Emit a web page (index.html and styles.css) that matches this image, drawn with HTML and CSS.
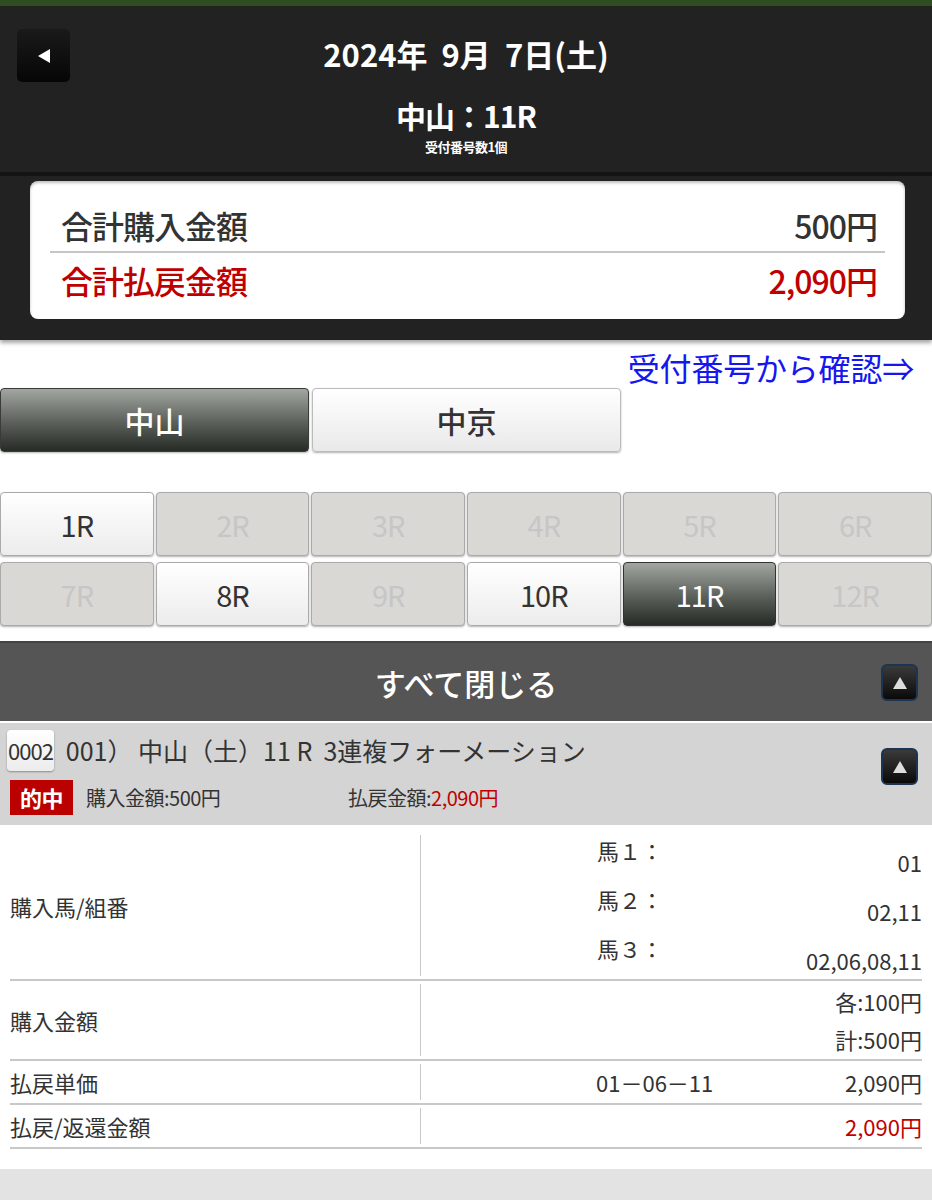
FILE: index.html
```html
<!DOCTYPE html>
<html lang="ja">
  <head>
    <meta charset="UTF-8" />
    <meta name="viewport" content="width=device-width, initial-scale=1.0" />
    <title>照会結果</title>
    <link rel="stylesheet" href="styles.css">
  </head>
  <body>
    <div class="topline"></div>
    <header class="head">
      <button class="back" type="button" aria-label="戻る">
        <svg width="16" height="18" viewBox="0 0 16 18"><path d="M2 9 L14 2 L14 16 Z" fill="#fff"/></svg>
      </button>
      <div class="date">2024年&nbsp; 9月&nbsp; 7日(土)</div>
      <div class="race">中山：11R</div>
      <div class="count">受付番号数1個</div>
    </header>
    <section class="summary">
      <div class="card">
        <div class="sum-row">
          <span>合計購入金額</span><span>500円</span>
        </div>
        <div class="sum-row red">
          <span>合計払戻金額</span><span>2,090円</span>
        </div>
      </div>
    </section>

    <div class="link-row"><a href="#" class="confirm">受付番号から確認⇒</a></div>

    <div class="venues">
      <button class="venue on" type="button">中山</button>
      <button class="venue" type="button">中京</button>
    </div>

    <div class="races">
      <button class="rb" type="button">1R</button>
      <button class="rb off" type="button">2R</button>
      <button class="rb off" type="button">3R</button>
      <button class="rb off" type="button">4R</button>
      <button class="rb off" type="button">5R</button>
      <button class="rb off" type="button">6R</button>
      <button class="rb off" type="button">7R</button>
      <button class="rb" type="button">8R</button>
      <button class="rb off" type="button">9R</button>
      <button class="rb" type="button">10R</button>
      <button class="rb sel" type="button">11R</button>
      <button class="rb off" type="button">12R</button>
    </div>

    <div class="closeall">
      <span>すべて閉じる</span>
      <button class="tog" type="button" aria-label="閉じる">
        <svg width="16" height="14" viewBox="0 0 16 14"><path d="M8 1 L15 13 L1 13 Z" fill="#ddd"/></svg>
      </button>
    </div>

    <div class="ticket">
      <div class="ticket-main">
        <div class="ticket-title">
          <span class="no">0002</span>
          <span>001）&nbsp;中山（土）11 R&nbsp; 3連複フォーメーション</span>
        </div>
        <div class="ticket-sub">
          <span class="hit">的中</span>
          <span class="buy">購入金額:500円</span>
          <span class="pay">払戻金額:<em>2,090円</em></span>
        </div>
      </div>
      <button class="tog" type="button" aria-label="閉じる">
        <svg width="16" height="14" viewBox="0 0 16 14"><path d="M8 1 L15 13 L1 13 Z" fill="#ddd"/></svg>
      </button>
    </div>

    <div class="detail">
      <div class="drow">
        <div class="dl">購入馬/組番</div>
        <div class="dr">
          <div class="horse"><span class="hl">馬１：</span><span class="hv">01</span></div>
          <div class="horse"><span class="hl">馬２：</span><span class="hv">02,11</span></div>
          <div class="horse"><span class="hl">馬３：</span><span class="hv">02,06,08,11</span></div>
        </div>
      </div>
      <div class="drow">
        <div class="dl">購入金額</div>
        <div class="dr stack">
          <span>各:100円</span>
          <span>計:500円</span>
        </div>
      </div>
      <div class="drow">
        <div class="dl">払戻単価</div>
        <div class="dr split"><span class="combo">01－06－11</span><span>2,090円</span></div>
      </div>
      <div class="drow">
        <div class="dl">払戻/返還金額</div>
        <div class="dr split"><span></span><span class="redtxt">2,090円</span></div>
      </div>
    </div>

    <footer class="foot"></footer>
  </body>
</html>
```

FILE: styles.css
```css
body {
  margin: 0;
  background: #fff;
  font-family: "Noto Sans CJK JP", "Noto Sans", sans-serif;
  color: #333;
}

button {
  font-family: inherit;
  cursor: pointer;
}

.topline {
  height: 6px;
  background: #304d22;
}

.head {
  position: relative;
  height: 170px;
  background: #222;
  color: #fff;
  text-align: center;
  border-bottom: 4px solid #141414;
  box-sizing: border-box;
  padding-top: 30px;
}

.back {
  position: absolute;
  left: 17px;
  top: 23px;
  width: 53px;
  height: 53px;
  border: none;
  border-radius: 5px;
  background: linear-gradient(#1a1a1a, #060606);
  display: flex;
  align-items: center;
  justify-content: center;
  padding: 0;
}

.date {
  font-size: 31px;
  font-weight: 700;
  line-height: 36px;
}

.race {
  margin-top: 26px;
  font-size: 30px;
  font-weight: 700;
  line-height: 34px;
  letter-spacing: -1px;
}

.count {
  margin-top: 7px;
  font-size: 13px;
  font-weight: 700;
  line-height: 16px;
  letter-spacing: -0.5px;
}

.summary {
  background: #222;
  padding: 5px 27px 21px 30px;
  box-shadow: 0 3px 4px rgba(0, 0, 0, 0.35);
}

.card {
  background: #fff;
  border-radius: 8px;
  padding: 18px 20px 12px 20px;
  box-shadow: inset 0 2px 3px rgba(0, 0, 0, 0.25);
}

.sum-row {
  display: flex;
  justify-content: space-between;
  font-size: 32px;
  font-weight: 500;
  line-height: 52px;
  padding: 0 8px 0 11px;
  letter-spacing: -1px;
  color: #333;
}

.sum-row:first-child {
  border-bottom: 2px solid #c6c6c6;
}

.sum-row.red {
  color: #c00000;
  line-height: 54px;
}

.link-row {
  display: flex;
  justify-content: flex-end;
  padding: 6px 18px 0 0;
  height: 42px;
}

.confirm {
  color: #1616ee;
  font-size: 32px;
  line-height: 42px;
  text-decoration: none;
  letter-spacing: -0.2px;
}

.venues {
  display: flex;
  gap: 3px;
}

.venue {
  width: 309px;
  height: 64px;
  border: 1px solid #bbb;
  border-radius: 4px;
  background: linear-gradient(#fff, #e9e9e9);
  font-size: 30px;
  color: #333;
  font-weight: 500;
  box-shadow: 0 1px 2px rgba(0, 0, 0, 0.3);
}

.venue.on {
  background: linear-gradient(#a2a6a1, #5b5f59 55%, #262b25);
  color: #fff;
  border-color: #3a3a3a;
}

.races {
  display: grid;
  grid-template-columns: repeat(6, 1fr);
  column-gap: 2px;
  row-gap: 6px;
  padding-top: 40px;
}

.rb {
  height: 64px;
  border: 1px solid #aaa;
  border-radius: 4px;
  background: linear-gradient(#fff, #ececec);
  font-size: 29px;
  color: #333;
  padding: 0;
  letter-spacing: -1px;
  box-shadow: 0 1px 2px rgba(0, 0, 0, 0.3);
}

.rb.off {
  background: #d9d8d5;
  color: #c6c6c6;
}

.rb.sel {
  background: linear-gradient(#a2a6a1, #5b5f59 55%, #262b25);
  color: #fff;
  border-color: #333;
}

.closeall {
  position: relative;
  margin-top: 15px;
  height: 82px;
  background: #555;
  border-top: 2px solid #444;
  border-bottom: 2px solid #fff;
  display: flex;
  align-items: center;
  justify-content: center;
  color: #fff;
  font-size: 31px;
  font-weight: 500;
  box-sizing: border-box;
}

.closeall .tog {
  position: absolute;
  right: 14px;
  top: 21px;
}

.tog {
  width: 37px;
  height: 37px;
  border-radius: 6px;
  border: 2px solid #1d3550;
  background: linear-gradient(#3a3a3a, #0a0a0a);
  display: flex;
  align-items: center;
  justify-content: center;
  padding: 0;
}

.ticket {
  background: #d4d4d4;
  display: flex;
  align-items: flex-start;
  padding: 7px 14px 10px 7px;
  gap: 10px;
}

.ticket-main {
  flex-grow: 1;
}

.ticket .tog {
  margin-top: 18px;
}

.ticket-title {
  display: flex;
  align-items: center;
  gap: 12px;
  font-size: 25px;
  line-height: 41px;
}

.no {
  background: linear-gradient(#fff, #ececec);
  border-radius: 4px;
  box-shadow: 0 1px 2px rgba(0, 0, 0, 0.35);
  padding: 0 1px;
  line-height: 41px;
  font-size: 22px;
  letter-spacing: -1px;
}

.ticket-sub {
  display: flex;
  align-items: center;
  padding-left: 3px;
  margin-top: 9px;
  font-size: 20px;
  line-height: 35px;
  letter-spacing: -0.5px;
}

.hit {
  background: #bb0000;
  color: #fff;
  font-size: 22px;
  font-weight: 700;
  padding: 0 4px;
  width: 55px;
  text-align: center;
}

.buy {
  margin-left: 13px;
  width: 262px;
}

.pay em {
  font-style: normal;
  color: #c00000;
}

.detail {
  padding: 7px 10px 0 10px;
  font-size: 22px;
  color: #333;
}

.drow {
  display: flex;
  border-bottom: 2px solid #c8c8c8;
}

.dl {
  width: 410px;
  flex-shrink: 0;
  border-right: 1px solid #c8c8c8;
  display: flex;
  align-items: center;
  margin: 3px 0;
}

.dr {
  flex-grow: 1;
  padding: 0 0 0 10px;
}

.horse {
  display: flex;
  justify-content: space-between;
  height: 49px;
}

.horse .hl {
  margin-left: 166px;
  padding-top: 4px;
  line-height: 28px;
}

.horse .hv {
  padding-top: 16px;
  line-height: 28px;
}

.stack {
  display: flex;
  flex-direction: column;
  align-items: flex-end;
  padding-top: 1px;
  padding-bottom: 1px;
}

.stack span {
  line-height: 38px;
}

.split {
  display: flex;
  justify-content: space-between;
  align-items: center;
  height: 42px;
}

.combo {
  margin-left: 165px;
}

.redtxt {
  color: #c00000;
}

.foot {
  margin-top: 20px;
  height: 40px;
  background: #e3e3e3;
}
```
